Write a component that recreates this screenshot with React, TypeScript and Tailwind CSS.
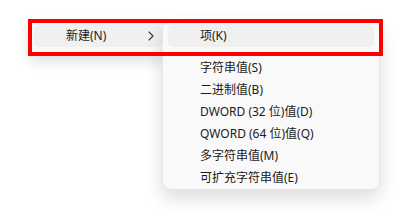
import React from 'react';

const subItems = [
  '字符串值(S)',
  '二进制值(B)',
  'DWORD (32 位)值(D)',
  'QWORD (64 位)值(Q)',
  '多字符串值(M)',
  '可扩充字符串值(E)',
];

const Chevron = () => (
  <svg width="6" height="10" viewBox="0 0 6 10" fill="none">
    <path d="M1 1l4 4-4 4" stroke="#3a3a3a" strokeWidth="1.1" strokeLinecap="round" strokeLinejoin="round" />
  </svg>
);

const App = () => {
  return (
    <div
      className="relative w-[413px] h-[216px] overflow-hidden bg-white text-[12px] text-[#1b1b1b]"
      style={{ fontFamily: '"Noto Sans", "Noto Sans CJK SC", sans-serif' }}
    >
      {/* parent menu */}
      <div className="absolute left-[28px] top-[19px] w-[140px] h-[37px] rounded-lg bg-[#f9f9f9] shadow-[0_6px_14px_rgba(0,0,0,0.12)] px-[6px] py-[6px]">
        <div className="flex items-center h-[22px] rounded-[5px] bg-[#f0f0f0] pl-[32px] pr-[8px]">
          <span className="flex-1 leading-none">新建(N)</span>
          <Chevron />
        </div>
      </div>

      {/* sub menu */}
      <div className="absolute left-[162px] top-[20px] w-[218px] h-[170px] rounded-lg border border-[#e6e6e6] bg-[#f9f9f9] shadow-[0_8px_18px_rgba(0,0,0,0.14)] px-[5px] pt-[4px] flex flex-col">
        <div className="flex items-center h-[22px] rounded-[5px] bg-[#f0f0f0] pl-[32px] leading-none">项(K)</div>
        <div className="h-[10px]" />
        {subItems.map((label) => (
          <div key={label} className="flex items-center h-[22px] pl-[32px] leading-none">
            {label}
          </div>
        ))}
      </div>

      {/* annotation */}
      <div className="absolute left-[28px] top-[19px] w-[355px] h-[37px] border-4 border-[#ff0000]" />
    </div>
  );
};

export default App;
